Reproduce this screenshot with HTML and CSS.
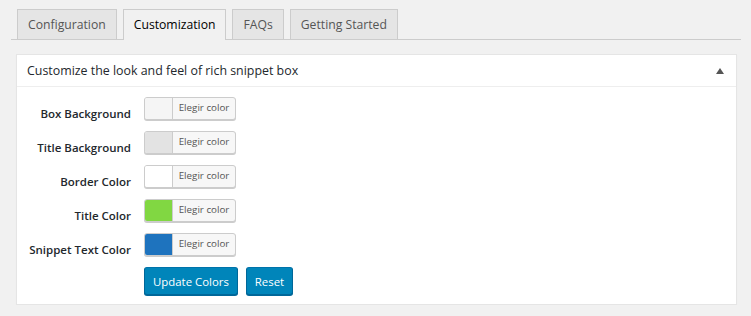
FILE: index.html
```html
<!DOCTYPE html>
<html lang="en">
<head>
    <meta charset="UTF-8">
    <title>Rich Snippets - Customization</title>
    <link rel="stylesheet" href="styles.css">
</head>
<body>

    <!-- Tabs -->
    <div class="nav-tabs">
        <a class="nav-tab">Configuration</a>
        <a class="nav-tab active">Customization</a>
        <a class="nav-tab">FAQs</a>
        <a class="nav-tab">Getting Started</a>
    </div>

    <!-- Customization panel -->
    <div class="postbox">
        <div class="postbox-head">
            <span>Customize the look and feel of rich snippet box</span>
            <span class="toggle-arrow"></span>
        </div>
        <div class="postbox-body">
            <div class="field-row">
                <label>Box Background</label>
                <button class="color-btn"><span class="swatch" style="background:#f5f5f5"></span><span class="color-text">Elegir color</span></button>
            </div>
            <div class="field-row">
                <label>Title Background</label>
                <button class="color-btn"><span class="swatch" style="background:#e3e3e3"></span><span class="color-text">Elegir color</span></button>
            </div>
            <div class="field-row">
                <label>Border Color</label>
                <button class="color-btn"><span class="swatch" style="background:#ffffff"></span><span class="color-text">Elegir color</span></button>
            </div>
            <div class="field-row">
                <label>Title Color</label>
                <button class="color-btn"><span class="swatch" style="background:#81d742"></span><span class="color-text">Elegir color</span></button>
            </div>
            <div class="field-row">
                <label>Snippet Text Color</label>
                <button class="color-btn"><span class="swatch" style="background:#1e73be"></span><span class="color-text">Elegir color</span></button>
            </div>
            <div class="actions">
                <button class="btn-primary">Update Colors</button>
                <button class="btn-primary">Reset</button>
            </div>
        </div>
    </div>

</body>
</html>
```

FILE: styles.css
```css
body {
    margin: 0;
    padding: 0;
    background-color: #f1f1f1;
    font-family: 'Open Sans', sans-serif;
    color: #23282d;
}

/* Tabs */
.nav-tabs {
    display: flex;
    align-items: flex-start;
    margin: 0 10px 0 11px;
    padding-top: 9px;
    border-bottom: 1px solid #ccc;
    height: 40px;
    box-sizing: border-box;
}

.nav-tab {
    display: block;
    margin-left: 6px;
    padding: 0 10px;
    height: 30px;
    line-height: 29px;
    box-sizing: border-box;
    border: 1px solid #ccc;
    border-bottom: none;
    background-color: #e5e5e5;
    color: #555;
    font-size: 12.2px;
    text-decoration: none;
}

.nav-tab.active {
    background-color: #f1f1f1;
    color: #000;
    height: 31px;
}

/* Panel */
.postbox {
    margin: 14px 14px 0 16px;
    background-color: #fff;
    border: 1px solid #e5e5e5;
    box-shadow: 0 1px 1px rgba(0, 0, 0, 0.04);
}

.postbox-head {
    display: flex;
    justify-content: space-between;
    align-items: center;
    height: 31px;
    padding: 0 12px 0 10px;
    border-bottom: 1px solid #eee;
    font-size: 12.4px;
}

.toggle-arrow {
    width: 0;
    height: 0;
    border-left: 4px solid transparent;
    border-right: 4px solid transparent;
    border-bottom: 6px solid #555;
}

.postbox-body {
    padding: 10px 0 9px 0;
}

.field-row {
    display: flex;
    align-items: flex-start;
    height: 23px;
    margin-bottom: 11px;
}

.field-row label {
    width: 114px;
    margin-right: 13px;
    padding-top: 9px;
    line-height: 15px;
    text-align: right;
    font-size: 11.5px;
    font-weight: 600;
    color: #23282d;
    white-space: nowrap;
}

.color-btn {
    display: flex;
    align-items: stretch;
    width: 92px;
    height: 23px;
    padding: 0;
    border: 1px solid #ccc;
    border-radius: 3px;
    background-color: #f7f7f7;
    box-shadow: 0 1px 0 #ccc;
    overflow: hidden;
    cursor: pointer;
}

.swatch {
    width: 27px;
    border-right: 1px solid #ccc;
}

.color-text {
    flex-grow: 1;
    line-height: 20px;
    font-family: 'Open Sans', sans-serif;
    font-size: 9.8px;
    color: #555;
}

/* Buttons */
.actions {
    display: flex;
    gap: 8px;
    margin-left: 127px;
}

.btn-primary {
    height: 28px;
    padding: 0 8px;
    background-color: #0085ba;
    border: 1px solid #0073aa;
    border-color: #0073aa #006799 #006799;
    border-radius: 3px;
    box-shadow: 0 1px 0 #006799;
    color: #fff;
    font-family: 'Open Sans', sans-serif;
    font-size: 11.4px;
    cursor: pointer;
}
```
